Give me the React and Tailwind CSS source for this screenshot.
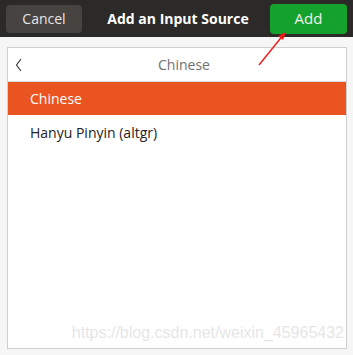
export default function App() {
  return (
    <div className="relative w-[353px] h-[355px] bg-[#f6f6f6] font-['Open_Sans',sans-serif] overflow-hidden">
      {/* title bar */}
      <div className="h-[37px] bg-[#2c2a28] flex items-center pl-[6px] pr-[6px]">
        <button className="w-[76px] h-[28px] rounded-[4px] bg-[#464340] text-[#e6e6e6] text-[14px]">
          Cancel
        </button>
        <div className="flex-1 text-center text-white font-bold text-[14px] pl-[4px]">
          Add an Input Source
        </div>
        <button className="w-[77px] h-[30px] rounded-[4px] bg-[#14a22c] text-[#f0f0f0] text-[15px]">
          Add
        </button>
      </div>

      {/* list panel */}
      <div className="mt-[10px] ml-[7px] w-[340px] h-[302px] bg-white border border-[#cfcfcf] flex flex-col">
        <div className="h-[34px] flex items-center border-b border-[#dcdcdc] relative">
          <svg className="absolute left-[7px] top-[10px]" width="8" height="14" viewBox="0 0 8 14">
            <path d="M6 1 L1.5 7 L6 13" fill="none" stroke="#3c3c3c" strokeWidth="1.2" />
          </svg>
          <div className="flex-1 text-center text-[#707070] text-[14px] pl-[14px]">Chinese</div>
        </div>
        <div className="h-[33px] bg-[#e95420] text-white text-[14px] flex items-center pl-[22px]">
          Chinese
        </div>
        <div className="h-[34px] text-[#222] text-[14px] flex items-center pl-[22px]">
          Hanyu Pinyin (altgr)
        </div>
        <div className="flex-1 flex items-end justify-end pr-[2px] pb-[3px]">
          <span className="font-['Liberation_Sans',sans-serif] text-[16px] text-[#e6e6e6]">
            https://blog.csdn.net/weixin_45965432
          </span>
        </div>
      </div>

      {/* annotation arrow */}
      <svg className="absolute left-0 top-0" width="353" height="355" viewBox="0 0 353 355">
        <line x1="259" y1="65" x2="284" y2="34" stroke="#f01818" strokeWidth="1.4" />
        <path d="M286 32 L278 36 L283 40 Z" fill="#f01818" />
      </svg>
    </div>
  );
}
